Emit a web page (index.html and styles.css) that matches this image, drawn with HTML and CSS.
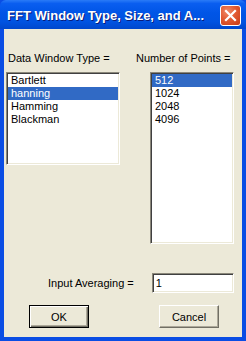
FILE: index.html
```html
<!DOCTYPE html>
<html lang="en">
<head>
    <meta charset="UTF-8">
    <title>FFT Window Type, Size, and A...</title>
    <link rel="stylesheet" href="styles.css">
</head>
<body>

    <div class="window">

        <!-- Title bar -->
        <div class="titlebar">
            <span class="title">FFT Window Type, Size, and A...</span>
            <span class="close">
                <svg width="13" height="13" viewBox="0 0 13 13">
                    <path d="M2 2 L11 11 M11 2 L2 11" stroke="#fff" stroke-width="2.2" stroke-linecap="square"/>
                </svg>
            </span>
        </div>

        <!-- Client area -->
        <div class="client">
            <div class="lists">
                <div class="col col-left">
                    <div class="label">Data Window Type =</div>
                    <ul class="listbox listbox-left">
                        <li>Bartlett</li>
                        <li class="selected">hanning</li>
                        <li>Hamming</li>
                        <li>Blackman</li>
                    </ul>
                </div>
                <div class="col col-right">
                    <div class="label">Number of Points =</div>
                    <ul class="listbox listbox-right">
                        <li class="selected">512</li>
                        <li>1024</li>
                        <li>2048</li>
                        <li>4096</li>
                    </ul>
                </div>
            </div>

            <div class="avg-row">
                <span class="label avg-label">Input Averaging =</span>
                <div class="textbox">1</div>
            </div>

            <div class="buttons">
                <button class="btn btn-default">OK</button>
                <button class="btn">Cancel</button>
            </div>
        </div>

    </div>

</body>
</html>
```

FILE: styles.css
```css
/* General */
body {
    margin: 0;
    padding: 0;
    font-family: 'Liberation Sans', Arial, sans-serif;
    font-size: 11px;
    color: #000;
    background: #ece9d8;
}

.window {
    width: 246px;
    height: 341px;
    box-sizing: border-box;
    background: #0a4de4;
    display: flex;
    flex-direction: column;
}

/* Title bar */
.titlebar {
    height: 29px;
    flex: none;
    display: flex;
    align-items: center;
    justify-content: space-between;
    padding: 0 5px 0 7px;
    background: linear-gradient(#2a7bf7 0%, #0a5ef0 12%, #0055e6 45%, #0053e1 75%, #0047cc 100%);
    border-radius: 6px 6px 0 0;
}

.title {
    color: #fff;
    font-weight: bold;
    font-size: 13px;
    text-shadow: 1px 1px #0a1c7a;
    margin-top: 1px;
}

.close {
    width: 21px;
    height: 21px;
    box-sizing: border-box;
    border: 1px solid #fff;
    border-radius: 3px;
    background: radial-gradient(circle at 35% 30%, #f08b6a 0%, #e25b33 45%, #c93a14 100%);
    display: flex;
    align-items: center;
    justify-content: center;
    margin-top: 1px;
}

/* Client area */
.client {
    flex: 1;
    margin: 0 4px 4px 4px;
    background: #ece9d8;
    padding: 23px 0 0 2px;
}

.lists {
    display: flex;
}

.col-left {
    width: 114px;
}

.col-right {
    margin-left: 16px;
}

.label {
    line-height: 13px;
    white-space: nowrap;
}

.col-left .label {
    padding-left: 2px;
}

/* Listboxes */
.listbox {
    list-style: none;
    margin: 7px 0 0 0;
    padding: 1px 0 0 0;
    box-sizing: border-box;
    background: #fff;
    border: 1px solid;
    border-color: #8a877a #fff #fff #8a877a;
    box-shadow: inset 1px 1px #404040, inset -1px -1px #ece9d8;
}

.listbox li {
    line-height: 13px;
    height: 13px;
    padding-left: 3px;
    margin: 0 1px 0 1px;
}

.listbox li.selected {
    background: #316ac5;
    color: #fff;
}

.listbox-left {
    width: 114px;
    height: 93px;
}

.listbox-right {
    width: 84px;
    height: 172px;
    margin-left: 14px;
}

/* Input averaging */
.avg-row {
    display: flex;
    align-items: center;
    margin-top: 29px;
}

.avg-label {
    margin-left: 42px;
}

.textbox {
    margin-left: 18px;
    width: 82px;
    height: 20px;
    box-sizing: border-box;
    background: #fff;
    border: 1px solid;
    border-color: #8a877a #fff #fff #8a877a;
    box-shadow: inset 1px 1px #404040, inset -1px -1px #ece9d8;
    padding-left: 3px;
    line-height: 18px;
}

/* Buttons */
.buttons {
    display: flex;
    margin-top: 12px;
    padding-left: 23px;
    gap: 70px;
}

.btn {
    width: 60px;
    height: 23px;
    box-sizing: border-box;
    font-family: 'Liberation Sans', Arial, sans-serif;
    font-size: 11px;
    color: #000;
    background: #ece9d8;
    border: 1px solid;
    border-color: #fff #716f64 #716f64 #fff;
    box-shadow: inset -1px -1px #aca899;
    padding: 0;
}

.btn-default {
    border: 1px solid #000;
    box-shadow: inset 1px 1px #fff, inset -1px -1px #716f64, inset -2px -2px #aca899;
}
```
